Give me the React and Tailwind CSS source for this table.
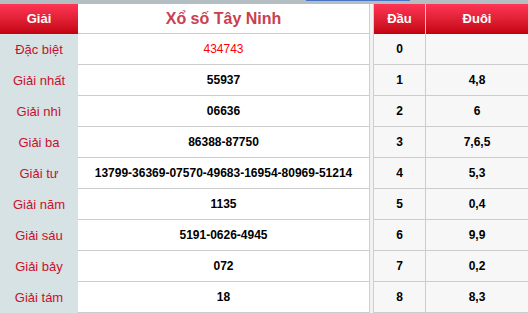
import React from 'react';

const prizes = [
  { name: 'Đặc biệt', value: '434743', special: true },
  { name: 'Giải nhất', value: '55937' },
  { name: 'Giải nhì', value: '06636' },
  { name: 'Giải ba', value: '86388-87750' },
  { name: 'Giải tư', value: '13799-36369-07570-49683-16954-80969-51214' },
  { name: 'Giải năm', value: '1135' },
  { name: 'Giải sáu', value: '5191-0626-4945' },
  { name: 'Giải bảy', value: '072' },
  { name: 'Giải tám', value: '18' },
];

const heads = [
  { dau: '0', duoi: '' },
  { dau: '1', duoi: '4,8' },
  { dau: '2', duoi: '6' },
  { dau: '3', duoi: '7,6,5' },
  { dau: '4', duoi: '5,3' },
  { dau: '5', duoi: '0,4' },
  { dau: '6', duoi: '9,9' },
  { dau: '7', duoi: '0,2' },
  { dau: '8', duoi: '8,3' },
];

const App = () => {
  return (
    <div className="w-[528px] h-[313px] overflow-hidden bg-white font-['Liberation_Sans',Arial,sans-serif]">
      {/* top strip */}
      <div className="h-[4px] bg-[#b3bec2] flex">
        <div className="w-[306px]" />
        <div className="w-[104px] h-[1px] bg-[#4a73c6]" />
      </div>

      <div className="flex">
        {/* Results table */}
        <div className="w-[370px] border-r border-[#cfcfcf]">
          <div className="flex h-[30px]">
            <div className="w-[78px] flex items-center justify-center bg-gradient-to-b from-[#ff3554] to-[#c2000e] text-white font-bold text-[13px]">
              Giải
            </div>
            <div className="flex-1 flex items-center justify-center border-b border-[#cccccc] text-[#c9404f] font-bold text-[16px]">
              Xổ số Tây Ninh
            </div>
          </div>
          {prizes.map((p) => (
            <div key={p.name} className="flex h-[31px]">
              <div className="w-[78px] flex items-center justify-center bg-[#d6e2e3] text-[#c8102e] text-[13px]">
                {p.name}
              </div>
              <div
                className={`flex-1 flex items-center justify-center border-b border-[#cccccc] text-[12px] ${
                  p.special ? 'text-[#ff0000]' : 'text-black font-bold'
                }`}
              >
                {p.value}
              </div>
            </div>
          ))}
        </div>

        <div className="w-[3px] bg-[#f2f2f2]" />

        {/* Loto table */}
        <div className="flex-1 border-l border-[#cfcfcf] bg-[#f7f7f7]">
          <div className="flex h-[30px] bg-gradient-to-b from-[#ff3554] to-[#c2000e] text-white font-bold text-[13px]">
            <div className="w-[52px] flex items-center justify-center border-r border-[#f4c0c6]">Đầu</div>
            <div className="flex-1 flex items-center justify-center">Đuôi</div>
          </div>
          {heads.map((h) => (
            <div key={h.dau} className="flex h-[31px] text-[12px] font-bold text-black">
              <div className="w-[52px] flex items-center justify-center border-r border-b border-[#cccccc]">
                {h.dau}
              </div>
              <div className="flex-1 flex items-center justify-center border-b border-[#cccccc]">
                {h.duoi}
              </div>
            </div>
          ))}
        </div>
      </div>
    </div>
  );
};

export default App;
